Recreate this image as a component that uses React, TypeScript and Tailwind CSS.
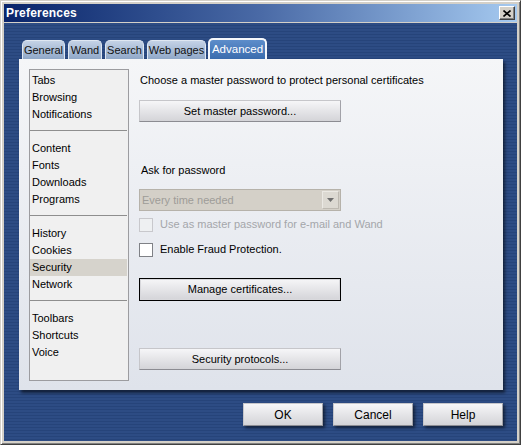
import type { ReactNode } from 'react'

const groups = [
  ['Tabs', 'Browsing', 'Notifications'],
  ['Content', 'Fonts', 'Downloads', 'Programs'],
  ['History', 'Cookies', 'Security', 'Network'],
  ['Toolbars', 'Shortcuts', 'Voice'],
]

const tabs = [
  { label: 'General', w: 'w-[43px]' },
  { label: 'Wand', w: 'w-[34px]' },
  { label: 'Search', w: 'w-[39px]' },
  { label: 'Web pages', w: 'w-[59px]' },
]

function Button({ children, className = '' }: { children: ReactNode; className?: string }) {
  return (
    <button
      className={`flex items-center justify-center border border-[#c6c6ca] border-r-[#a2a2a8] border-b-[#8c8c92] bg-linear-to-b from-[#f6f6f8] to-[#d4d4d8] text-black ${className}`}
    >
      {children}
    </button>
  )
}

function Checkbox({ label, disabled }: { label: string; disabled?: boolean }) {
  return (
    <label className="flex items-center gap-[7px] h-[17px]">
      <span
        className={
          disabled
            ? 'w-[14px] h-[14px] border border-[#c8c8cc] bg-[#eef0f2]'
            : 'w-[14px] h-[14px] border border-[#7f8186] bg-white'
        }
      />
      <span className={disabled ? 'text-[#a4a6aa]' : 'text-black'}>{label}</span>
    </label>
  )
}

function Sidebar() {
  return (
    <div className="w-[100px] h-[312px] border border-[#9c9ca0] bg-[#f0f0f0] pt-[2px] pr-px">
      {groups.map((group, i) => (
        <div key={i}>
          {i > 0 && <div className="mt-[7px] mb-[9px] h-px bg-[#8e8e8e]" />}
          {group.map((item) => (
            <div
              key={item}
              className={`h-[17px] leading-[17px] pl-[2px] text-black ${item === 'Security' ? 'bg-[#d6d3cc]' : ''}`}
            >
              {item}
            </div>
          ))}
        </div>
      ))}
    </div>
  )
}

export default function App() {
  return (
    <div className="w-[521px] h-[445px] flex flex-col bg-[#d4d0c8] border border-t-[#d4d0c8] border-l-[#d4d0c8] border-r-[#404040] border-b-[#404040] shadow-[inset_1px_1px_0_#ffffff,inset_-1px_-1px_0_#808080] p-[3px] font-['Liberation_Sans',Arial,sans-serif] text-[11px] select-none">
      {/* title bar */}
      <div className="h-[18px] flex items-center justify-between pl-[2px] pr-[2px] bg-linear-to-r from-[#0a246a] via-[#4a6aa6] to-[#a6caf0]">
        <span className="text-white font-bold text-[12px] tracking-[0.2px]">Preferences</span>
        <div className="w-[16px] h-[14px] flex items-center justify-center bg-[#d4d0c8] border border-t-white border-l-white border-r-[#404040] border-b-[#404040] shadow-[inset_-1px_-1px_0_#808080]">
          <svg width="8" height="7" viewBox="0 0 8 7">
            <path d="M0.5 0.5 L7.5 6.5 M7.5 0.5 L0.5 6.5" stroke="#000" strokeWidth="1.6" />
          </svg>
        </div>
      </div>

      {/* blue body */}
      <div className="mt-px flex-1 flex flex-col pl-[15px] pt-[15px] bg-[repeating-linear-gradient(to_bottom,#2d4c84_0px,#2d4c84_2px,#26447a_2px,#26447a_3px)]">
        <div className="h-[21px] flex items-end pl-[3px]">
          {tabs.map((t) => (
            <div
              key={t.label}
              className={`${t.w} h-[19px] mr-[3px] rounded-t-[5px] border-[1.5px] border-b-0 border-[#dfe7f2] bg-linear-to-b from-[#c4d2e6] to-[#90a8c8] flex items-center justify-center whitespace-nowrap text-[#111] text-[11px]`}
            >
              {t.label}
            </div>
          ))}
          <div className="w-[59px] h-[21px] -ml-px rounded-t-[5px] border-2 border-b-0 border-[#f4f7fb] bg-linear-to-b from-[#5d8dca] to-[#3a6cae] flex items-start justify-center pt-[1px] whitespace-nowrap text-white text-[11.5px]">
            Advanced
          </div>
        </div>

        <div className="w-[484px] h-[331px] flex gap-[10px] p-[10px] pb-[9px] bg-linear-to-b from-[#f5f6f8] to-[#dfe3eb] shadow-[2px_3px_3px_rgba(0,0,0,0.55)]">
          <Sidebar />
          <div className="flex flex-col">
            <div className="mt-[3px] leading-[17px] text-black pl-px">
              Choose a master password to protect personal certificates
            </div>
            <Button className="mt-[11px] w-[202px] h-[22px]">Set master password...</Button>

            <div className="mt-[40px] leading-[17px] text-black pl-[2px]">Ask for password</div>
            <div className="mt-[10px] w-[202px] h-[22px] flex items-center border border-[#b6b2aa] bg-[#d4d0c8] pl-[2px] text-[#9e9c98]">
              <span className="flex-1">Every time needed</span>
              <div className="w-[17px] h-[18px] mr-px border border-[#ebe9e4] border-r-[#bdb9b1] border-b-[#bdb9b1] bg-[#dcd9d2] flex items-center justify-center">
                <svg width="7" height="4" viewBox="0 0 7 4">
                  <path d="M0 0 H7 L3.5 4 Z" fill="#6e6e6e" />
                </svg>
              </div>
            </div>
            <div className="mt-[5px]">
              <Checkbox label="Use as master password for e-mail and Wand" disabled />
            </div>
            <div className="mt-[8px]">
              <Checkbox label="Enable Fraud Protection." />
            </div>

            <Button className="mt-[20px] w-[202px] h-[23px] !border-black shadow-[inset_0_0_0_1px_#d8d8dc]">
              Manage certificates...
            </Button>
            <Button className="mt-[47px] w-[202px] h-[22px]">Security protocols...</Button>
          </div>
        </div>

        <div className="mt-[13px] w-[484px] flex justify-end gap-[10px]">
          {['OK', 'Cancel', 'Help'].map((b) => (
            <Button key={b} className="w-[80px] h-[23px] text-[12px] shadow-[2px_2px_3px_rgba(0,0,0,0.55)]">
              {b}
            </Button>
          ))}
        </div>
      </div>
    </div>
  )
}
